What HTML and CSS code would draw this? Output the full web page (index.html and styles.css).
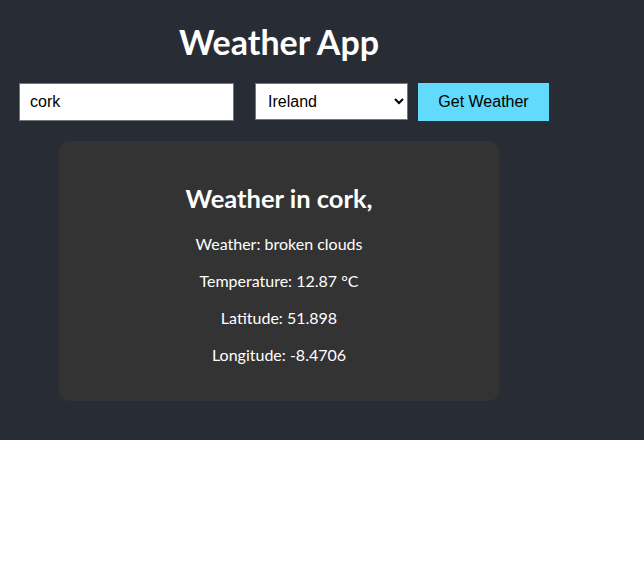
FILE: index.html
```html
<!DOCTYPE html>
<html>
<head>
<meta charset="utf-8">
<link rel="stylesheet" href="styles.css">
</head>
<body>
<div class="app">
  <div class="container">
    <h1 class="title">Weather App</h1>
    <form class="search">
      <input class="city" type="text" value="cork">
      <select class="country">
        <option>Ireland</option>
      </select>
      <button class="go" type="button">Get Weather</button>
    </form>
    <div class="card">
      <h2 class="card-title">Weather in cork,</h2>
      <p class="line">Weather: broken clouds</p>
      <p class="line">Temperature: 12.87 °C</p>
      <p class="line">Latitude: 51.898</p>
      <p class="line">Longitude: -8.4706</p>
    </div>
  </div>
</div>
</body>
</html>
```
FILE: styles.css
```css
html, body {
  margin: 0;
  padding: 0;
  background: #ffffff;
}
.app {
  background: #282c34;
  color: #ffffff;
  font-family: "Lato", "Open Sans", sans-serif;
  height: 440px;
}
.container {
  width: 558px;
  display: flex;
  flex-direction: column;
  align-items: center;
}
.title {
  font-size: 34px;
  font-weight: 700;
  line-height: 43px;
  margin: 20px 0 20px;
}
.search {
  display: flex;
  align-items: flex-start;
  align-self: flex-start;
  margin-left: 19px;
}
.city {
  box-sizing: border-box;
  width: 215px;
  height: 38px;
  padding: 0 10px;
  border: 1px solid #767676;
  font-family: "Liberation Sans", Arial, sans-serif;
  font-size: 16px;
  color: #000;
  margin: 0 21px 0 0;
}
.country {
  box-sizing: border-box;
  width: 153px;
  height: 37px;
  padding: 0 8px;
  border: 1px solid #767676;
  border-radius: 0;
  background: #fff;
  font-family: "Liberation Sans", Arial, sans-serif;
  font-size: 16px;
  color: #000;
  margin: 0 10px 0 0;
}
.go {
  box-sizing: border-box;
  width: 131px;
  height: 38px;
  border: none;
  background: #61dafb;
  font-family: "Liberation Sans", Arial, sans-serif;
  font-size: 16px;
  color: #000;
}
.card {
  box-sizing: border-box;
  width: 440px;
  margin-top: 20px;
  background: #333333;
  border-radius: 10px;
  padding: 20px;
  text-align: center;
}
.card-title {
  font-size: 25.5px;
  font-weight: 700;
  line-height: 32px;
  margin: 21px 0 19px;
}
.line {
  font-size: 16px;
  line-height: 21px;
  margin: 16px 0;
}
```
